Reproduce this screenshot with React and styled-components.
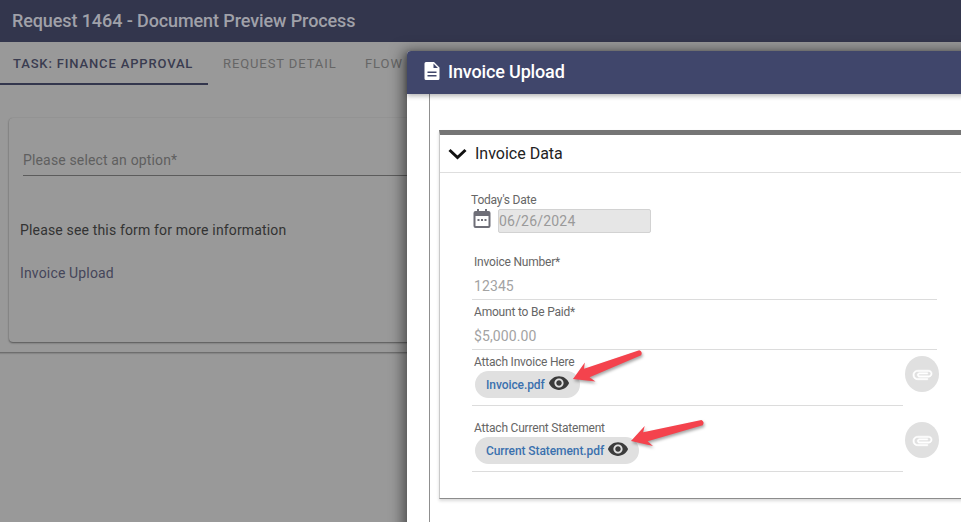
import React from "react";
import styled, { createGlobalStyle } from "styled-components";

const Global = createGlobalStyle`
  html, body { margin: 0; padding: 0; background: #999; }
  body { font-family: Roboto, "Liberation Sans", sans-serif; }
`;

const Screen = styled.div`
  position: relative;
  width: 961px;
  height: 522px;
  overflow: hidden;
  background: #999;
`;

const TopBar = styled.header`
  height: 42px;
  background: #33364d;
  display: flex;
  align-items: center;
  padding: 0 0 2px 12px;
  box-sizing: border-box;
  color: #a0a1a9;
  font-size: 18px;
  font-weight: 500;
  letter-spacing: -0.1px;
`;

const Tabs = styled.nav`
  height: 43px;
  display: flex;
`;

const Tab = styled.div`
  box-sizing: border-box;
  height: 43px;
  width: ${(p) => p.$w}px;
  padding: 14px 0 0 ${(p) => p.$pad}px;
  font-size: 13px;
  font-weight: ${(p) => (p.$active ? 500 : 400)};
  letter-spacing: ${(p) => (p.$active ? "0.85px" : "0.9px")};
  white-space: nowrap;
  color: ${(p) => (p.$active ? "#3a3c50" : "#666")};
  border-bottom: ${(p) => (p.$active ? "2px solid #33364d" : "2px solid transparent")};
`;

const PageBody = styled.div`
  height: 268px;
  box-sizing: border-box;
  padding: 33px 0 0 9px;
  border-bottom: 1px solid #6e6e6e;
  box-shadow: 0 1px 1px rgba(0, 0, 0, 0.12);
`;

const Card = styled.section`
  box-sizing: border-box;
  width: 700px;
  height: 224px;
  border-radius: 4px;
  background: #999;
  box-shadow: 0 1px 2px rgba(0, 0, 0, 0.45), 0 0 1px rgba(0, 0, 0, 0.12);
  padding: 31px 0 0 11px;
  display: flex;
  flex-direction: column;
`;

const SelectField = styled.div`
  margin-left: 3px;
  height: 26px;
  border-bottom: 1px solid #5c5c5c;
  font-size: 14px;
  letter-spacing: 0.15px;
  color: #5f5f5f;
  line-height: 22px;
`;

const InfoText = styled.div`
  margin-top: ${(p) => p.$mt}px;
  font-size: 14px;
  line-height: 20px;
  letter-spacing: 0.16px;
  color: ${(p) => p.$c};
`;

const Dialog = styled.div`
  position: absolute;
  left: 407px;
  top: 51px;
  width: 620px;
  height: 520px;
  background: #fff;
  border-radius: 4px 0 0 0;
  box-shadow: -4px 0 14px rgba(0, 0, 0, 0.5);
`;

const DialogHead = styled.div`
  position: relative;
  box-sizing: border-box;
  height: 43px;
  background: #40466b;
  border-radius: 4px 0 0 0;
  box-shadow: 0 2px 5px rgba(0, 0, 0, 0.3);
  display: flex;
  align-items: center;
  gap: 7px;
  padding: 0 0 3px 16px;
  color: #fff;
  font-size: 18px;
  font-weight: 500;
  letter-spacing: -0.15px;
`;

const DialogBody = styled.div`
  margin-left: 22px;
  height: 477px;
  box-sizing: border-box;
  border-left: 1px solid #8f8f8f;
  padding: 36px 0 0 9px;
`;

const Panel = styled.section`
  box-sizing: border-box;
  width: 560px;
  height: 369px;
  border: 1px solid #c9c9c9;
  border-top: 5px solid #757575;
  border-bottom: 1px solid #8c8c8c;
  box-shadow: 0 2px 3px rgba(0, 0, 0, 0.15);
`;

const PanelHead = styled.div`
  box-sizing: border-box;
  height: 38px;
  border-bottom: 1px solid #dedede;
  display: flex;
  align-items: center;
  padding-left: 8px;
  gap: 7px;
  font-size: 16px;
  color: #222;
`;

const PanelBody = styled.div`
  padding: 20px 0 0 32px;
  display: flex;
  flex-direction: column;
`;

const SmallLabel = styled.div`
  font-size: 12px;
  line-height: 14px;
  letter-spacing: -0.2px;
  color: #666;
  white-space: nowrap;
  margin-left: ${(p) => p.$ml || 0}px;
`;

const DateRow = styled.div`
  display: flex;
  align-items: flex-start;
  gap: 7px;
  padding-left: 1px;
  height: 27px;
  margin-bottom: 14px;
  margin-top: 2px;
`;

const DateInput = styled.div`
  box-sizing: border-box;
  width: 153px;
  height: 24px;
  background: #e6e6e6;
  border: 1px solid #d2d2d2;
  border-radius: 2px;
  color: #9a9a9a;
  font-size: 14px;
  letter-spacing: 0.2px;
  line-height: 22px;
`;

const TextField = styled.div`
  box-sizing: border-box;
  width: 465px;
  height: 50px;
  border-bottom: 1px solid #dcdcdc;
  padding: 5px 0 0 2px;
`;

const FieldValue = styled.div`
  margin-top: 8px;
  font-size: 14px;
  line-height: 18px;
  letter-spacing: 0.1px;
  color: #a3a3a3;
`;

const AttachRow = styled.div`
  display: flex;
  width: 467px;
  margin-bottom: 10px;
`;

const AttachField = styled.div`
  box-sizing: border-box;
  width: 431px;
  height: 56px;
  border-bottom: 1px solid #dcdcdc;
  padding: 5px 0 0 2px;
`;

const Chip = styled.div`
  display: inline-flex;
  align-items: center;
  height: 27px;
  margin-top: 2px;
  margin-left: 1px;
  padding: 0 10px 0 11px;
  gap: 3px;
  border-radius: 14px;
  background: #e0e0e0;
  color: #3b71ae;
  font-size: 12px;
  font-weight: 500;
  letter-spacing: -0.08px;
`;

const EyeGlyph = styled.svg`
  margin-bottom: 3px;
`;

const ClipButton = styled.div`
  width: 34px;
  height: 36px;
  margin: 6px 0 0 2px;
  border-radius: 50%;
  background: #e0e0e0;
  color: #fff;
  display: flex;
  align-items: center;
  justify-content: center;
`;

const ArrowLayer = styled.svg`
  position: absolute;
  left: 0;
  top: 0;
  pointer-events: none;
  filter: drop-shadow(1px 2px 1.5px rgba(0, 0, 0, 0.35));
`;

const DocIcon = () => (
  <svg width="18" height="20" viewBox="0 0 18 20">
    <path fill="#fff" d="M3.500 1H11l5.500 5.500v11A1.500 1.500 0 0 1 15 19H3a1.500 1.500 0 0 1-1.500-1.500v-15A1.500 1.500 0 0 1 3 1z" />
    <path fill="#40466b" d="M10.500 2.500 15 7h-4.500zM4.500 10.500h9V12h-9zM4.500 14h9v1.500h-9z" />
  </svg>
);

const Chevron = () => (
  <svg width="20" height="20" viewBox="0 0 20 20">
    <path d="M1.500 6 9.500 13.500 17.500 6" fill="none" stroke="#111" strokeWidth="3" />
  </svg>
);

const Calendar = () => (
  <svg width="18" height="19" viewBox="0 0 18 19">
    <path fill="#6f6f78" d="M4 0h2v2h6V0h2v2h1.500a2 2 0 0 1 2 2v13a2 2 0 0 1-2 2h-13a2 2 0 0 1-2-2V4a2 2 0 0 1 2-2H4zM2.500 7v10h13V7z" />
    <path fill="#6f6f78" d="M4.500 10h2v2h-2zM8 10h2v2H8zM11.500 10h2v2h-2z" />
  </svg>
);

const Eye = () => (
  <EyeGlyph width="22" height="22" viewBox="0 0 24 24">
    <path fill="#3c3c3c" d="M12 4.500C7 4.500 2.730 7.610 1 12c1.730 4.390 6 7.500 11 7.500s9.270-3.110 11-7.500c-1.730-4.390-6-7.500-11-7.500zM12 17c-2.760 0-5-2.240-5-5s2.240-5 5-5 5 2.240 5 5-2.240 5-5 5zm0-8c-1.660 0-3 1.340-3 3s1.340 3 3 3 3-1.340 3-3-1.340-3-3-3z" />
  </EyeGlyph>
);

const Clip = () => (
  <svg width="21" height="21" viewBox="0 0 24 24">
    <path
      transform="rotate(90 12 12)"
      fill="#fff"
      stroke="#fff"
      strokeWidth="0.6"
      d="M16.500 6v11.500c0 2.210-1.790 4-4 4s-4-1.790-4-4V5c0-1.380 1.120-2.500 2.500-2.500s2.500 1.120 2.500 2.500v10.500c0 .55-.45 1-1 1s-1-.45-1-1V6H10v9.500c0 1.380 1.120 2.500 2.500 2.500s2.500-1.120 2.500-2.500V5c0-2.210-1.790-4-4-4S7 2.790 7 5v12.500c0 3.040 2.460 5.500 5.500 5.500s5.500-2.460 5.500-5.500V6h-1.500z"
    />
  </svg>
);

const ArrowShape = ({ x1, y1, x2, y2 }) => {
  const deg = (Math.atan2(y2 - y1, x2 - x1) * 180) / Math.PI;
  const len = Math.hypot(x2 - x1, y2 - y1);
  return (
    <path
      transform={`translate(${x2} ${y2}) rotate(${deg})`}
      fill="#f4434d"
      d={`M0 0 L-20 -10.500 L-16 -4.500 L${-len + 2} -2.800 Q${-len - 1} 0 ${-len + 2} 2.600 L-14 5.500 L-17 11 Z`}
    />
  );
};

export default function App() {
  return (
    <Screen>
      <Global />
      <TopBar>Request 1464 - Document Preview Process</TopBar>
      <Tabs>
        <Tab $active $w={208} $pad={13}>TASK: FINANCE APPROVAL</Tab>
        <Tab $w={157} $pad={15}>REQUEST DETAIL</Tab>
        <Tab $w={100} $pad={0}>FLOW</Tab>
      </Tabs>
      <PageBody>
        <Card>
          <SelectField>Please select an option*</SelectField>
          <InfoText $mt={44} $c="#333">Please see this form for more information</InfoText>
          <InfoText $mt={23} $c="#45465a">Invoice Upload</InfoText>
        </Card>
      </PageBody>
      <Dialog>
        <DialogHead>
          <DocIcon />
          Invoice Upload
        </DialogHead>
        <DialogBody>
          <Panel>
            <PanelHead>
              <Chevron />
              Invoice Data
            </PanelHead>
            <PanelBody>
              <SmallLabel $ml={-1}>Today's Date</SmallLabel>
              <DateRow>
                <Calendar />
                <DateInput>06/26/2024</DateInput>
              </DateRow>
              <TextField>
                <SmallLabel>Invoice Number*</SmallLabel>
                <FieldValue>12345</FieldValue>
              </TextField>
              <TextField>
                <SmallLabel>Amount to Be Paid*</SmallLabel>
                <FieldValue>$5,000.00</FieldValue>
              </TextField>
              <AttachRow>
                <AttachField>
                  <SmallLabel>Attach Invoice Here</SmallLabel>
                  <Chip>Invoice.pdf<Eye /></Chip>
                </AttachField>
                <ClipButton><Clip /></ClipButton>
              </AttachRow>
              <AttachRow>
                <AttachField>
                  <SmallLabel>Attach Current Statement</SmallLabel>
                  <Chip>Current Statement.pdf<Eye /></Chip>
                </AttachField>
                <ClipButton><Clip /></ClipButton>
              </AttachRow>
            </PanelBody>
          </Panel>
        </DialogBody>
      </Dialog>
      <ArrowLayer width="961" height="522" viewBox="0 0 961 522">
        <ArrowShape x1={642} y1={352} x2={573} y2={379} />
        <ArrowShape x1={704} y1={422} x2={631} y2={441} />
      </ArrowLayer>
    </Screen>
  );
}
